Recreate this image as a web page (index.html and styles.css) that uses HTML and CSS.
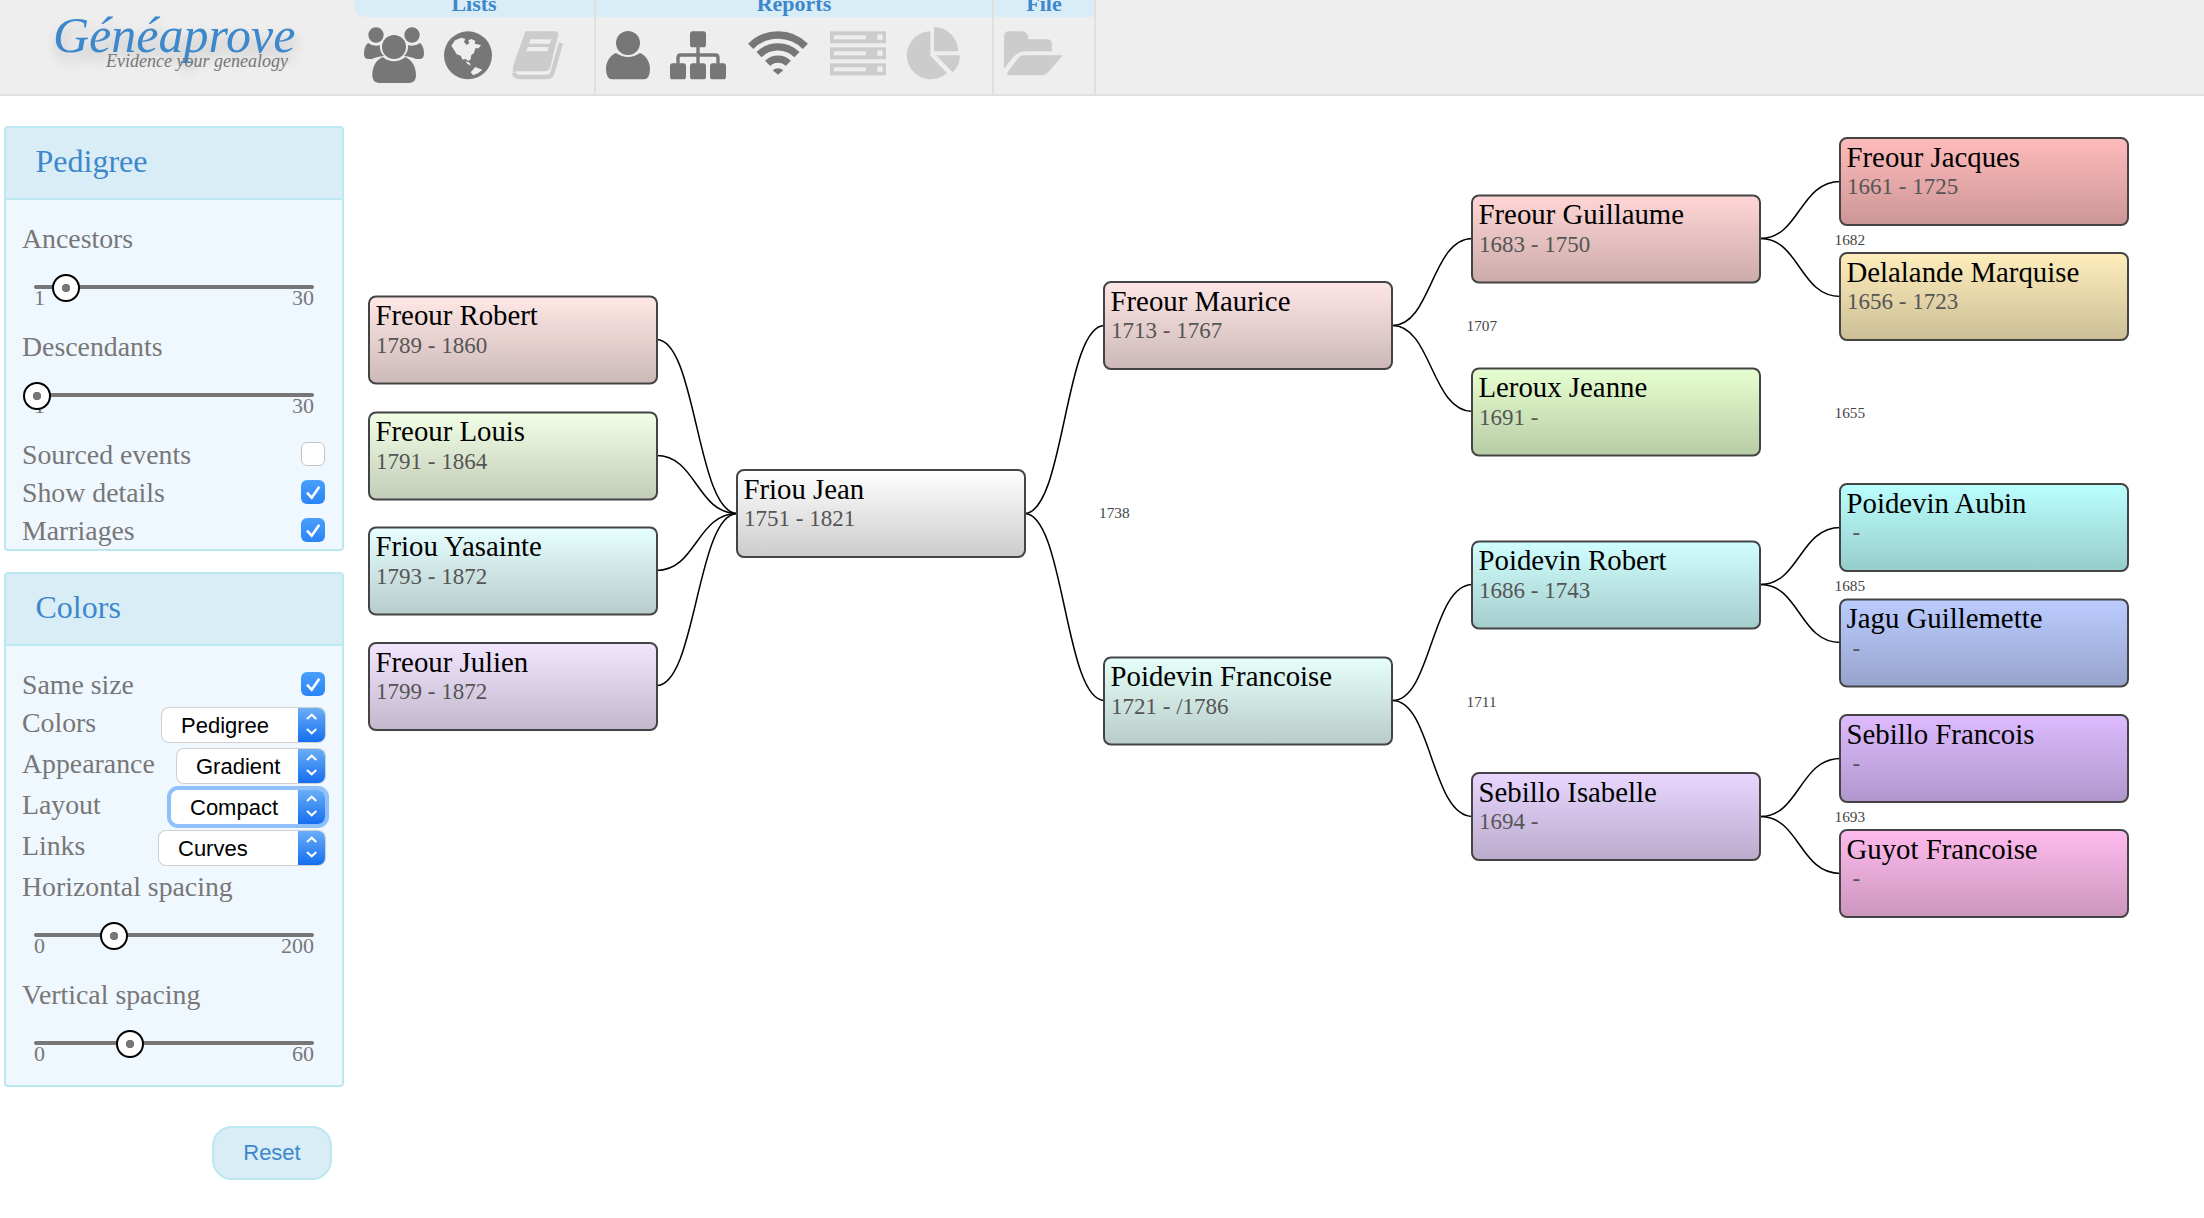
FILE: index.html
```html
<!DOCTYPE html>
<html lang="en">
<head>
  <meta charset="UTF-8">
  <title>Généaprove - Pedigree</title>
  <link rel="stylesheet" href="styles.css">
</head>
<body>

  <header class="topbar">
    <div class="logo">
      <div class="logo-name">Généaprove</div>
      <div class="logo-tag">Evidence your genealogy</div>
    </div>

    <nav class="menu menu-lists">
      <div class="menu-title">Lists</div>
      <div class="menu-icons">
        <svg class="icon" width="60" height="56.7" viewBox="30 20 180 170">
          <circle cx="66" cy="44" r="23"/><circle cx="174" cy="44" r="23"/><circle cx="120" cy="80" r="36"/>
          <path d="M55 165C55 140 65 120 86 110Q120 136 154 110C175 120 186 140 186 165Q186 188 165 188H76Q55 188 55 165Z"/>
          <path d="M42 68Q58 80 78 75Q76 95 90 107Q66 110 54 116H44Q30 116 30 100C30 88 33 75 42 68Z"/>
          <path d="M198 68Q182 80 162 75Q164 95 150 107Q174 110 186 116H196Q210 116 210 100C210 88 207 75 198 68Z"/>
        </svg>
        <svg class="icon" width="48" height="56.7" viewBox="270 20 144 170">
          <circle cx="342" cy="105" r="72"/>
          <path class="cut" d="M292 76L303 60L322 52L334 56L330 64L338 74L346 68L343 60L352 56L364 62L362 70L381 74L374 84L364 84L360 98L352 104L350 116L344 122L334 116L326 118L320 106L308 102L300 88Z"/>
          <path class="cut" d="M334 122L348 128L350 136L340 130Z"/>
          <path class="cut" d="M350 156L364 140L385 148L373 158L358 165Z"/>
        </svg>
        <svg class="icon icon-off" width="52" height="56.7" viewBox="475 20 156 170">
          <path d="M515 33H603Q616 33 613 47L590 140Q586 153 573 153H492Q482 153 478 160Q476 145 480 132Z"/>
          <path class="band" d="M480 158Q484 170 500 170H580Q592 170 596 158L622 68"/>
          <path class="cut" d="M530 57H593L589 70H526Z"/>
          <path class="cut" d="M522 80H585L581 93H518Z"/>
        </svg>
      </div>
    </nav>

    <nav class="menu menu-reports">
      <div class="menu-title">Reports</div>
      <div class="menu-icons">
        <svg class="icon" width="44" height="56.7" viewBox="18 20 132 170">
          <circle cx="84" cy="68" r="36"/>
          <path d="M18 145C18 125 30 105 48 98Q84 122 120 98C138 105 150 125 150 145Q150 177 130 177H38Q18 177 18 145Z"/>
        </svg>
        <svg class="icon" width="56" height="56.7" viewBox="210 20 168 170">
          <rect x="270" y="33" width="48" height="48" rx="8"/>
          <rect x="210" y="129" width="48" height="48" rx="8"/>
          <rect x="270" y="129" width="48" height="48" rx="8"/>
          <rect x="330" y="129" width="48" height="48" rx="8"/>
          <path class="band" d="M234 130V112Q234 104 242 104H346Q354 104 354 112V130M294 80V130"/>
        </svg>
        <svg class="icon" width="64" height="56.7" viewBox="438 20 192 170">
          <path class="wave" d="M452 78A116 116 0 0 1 616 78"/>
          <path class="wave" d="M477 103A81 81 0 0 1 591 103"/>
          <path class="wave" d="M503 129A44 44 0 0 1 565 129"/>
          <path d="M518 150Q534 138 550 150L534 163Z"/>
        </svg>
        <svg class="icon icon-off" width="56" height="56.7" viewBox="15 20 168 170">
          <rect x="15" y="33" width="168" height="36"/>
          <rect x="15" y="81" width="168" height="36"/>
          <rect x="15" y="129" width="168" height="36"/>
          <rect class="cut" x="27" y="45" width="96" height="12"/>
          <rect class="cut" x="27" y="93" width="96" height="12"/>
          <rect class="cut" x="27" y="141" width="96" height="12"/>
          <circle class="cut" cx="165" cy="51" r="9"/>
          <circle class="cut" cx="165" cy="99" r="9"/>
          <circle class="cut" cx="165" cy="147" r="9"/>
        </svg>
        <svg class="icon icon-off" width="54" height="56.7" viewBox="243 20 162 170">
          <path d="M316 33A72 72 0 1 0 366 158L316 106Z"/>
          <path d="M327 20A72 72 0 0 1 399 93H327Z"/>
          <path d="M333 105H405A72 72 0 0 1 383 156Z"/>
        </svg>
      </div>
    </nav>

    <nav class="menu menu-file">
      <div class="menu-title">File</div>
      <div class="menu-icons">
        <svg class="icon icon-off" width="59" height="56.7" viewBox="537 20 177 170">
          <path d="M537 50Q537 33 553 33H590Q610 33 610 57H665Q681 57 681 73V93H600Q580 93 565 110L537 145Z"/>
          <path d="M590 105H714L670 155Q660 165 650 165H555Q542 165 548 155L578 115Q585 105 600 105Z"/>
        </svg>
      </div>
    </nav>
  </header>

  <div class="page">
    <aside class="sidebar">

      <section class="panel">
        <h2 class="panel-head">Pedigree</h2>
        <div class="panel-body">
          <div class="label">Ancestors</div>
          <div class="slider">
            <div class="slider-track"></div>
            <div class="slider-ticks"><span>1</span><span>30</span></div>
            <div class="slider-knob" style="left: 17.5px"></div>
          </div>
          <div class="label">Descendants</div>
          <div class="slider">
            <div class="slider-track"></div>
            <div class="slider-ticks"><span>1</span><span>30</span></div>
            <div class="slider-knob" style="left: -11.5px"></div>
          </div>
          <div class="row">
            <span class="label">Sourced events</span>
            <span class="check"></span>
          </div>
          <div class="row">
            <span class="label">Show details</span>
            <span class="check check-on"><svg width="24" height="24" viewBox="0 0 24 24"><path d="M6 12.7L10.7 17.7L18.3 6.7"/></svg></span>
          </div>
          <div class="row">
            <span class="label">Marriages</span>
            <span class="check check-on"><svg width="24" height="24" viewBox="0 0 24 24"><path d="M6 12.7L10.7 17.7L18.3 6.7"/></svg></span>
          </div>
        </div>
      </section>

      <section class="panel">
        <h2 class="panel-head">Colors</h2>
        <div class="panel-body panel-body-last">
          <div class="row">
            <span class="label">Same size</span>
            <span class="check check-on"><svg width="24" height="24" viewBox="0 0 24 24"><path d="M6 12.7L10.7 17.7L18.3 6.7"/></svg></span>
          </div>
          <div class="row row-select">
            <span class="label">Colors</span>
            <div class="select select-colors">
              <span>Pedigree</span>
              <div class="select-arrow"><svg width="27" height="33" viewBox="0 0 27 33"><path d="M9 11L13.7 6.7L18.3 11M9 21L13.7 25.3L18.3 21"/></svg></div>
            </div>
          </div>
          <div class="row row-select">
            <span class="label">Appearance</span>
            <div class="select select-appearance">
              <span>Gradient</span>
              <div class="select-arrow"><svg width="27" height="33" viewBox="0 0 27 33"><path d="M9 11L13.7 6.7L18.3 11M9 21L13.7 25.3L18.3 21"/></svg></div>
            </div>
          </div>
          <div class="row row-select">
            <span class="label">Layout</span>
            <div class="select select-layout">
              <span>Compact</span>
              <div class="select-arrow"><svg width="27" height="33" viewBox="0 0 27 33"><path d="M9 11L13.7 6.7L18.3 11M9 21L13.7 25.3L18.3 21"/></svg></div>
            </div>
          </div>
          <div class="row row-select">
            <span class="label">Links</span>
            <div class="select select-links">
              <span>Curves</span>
              <div class="select-arrow"><svg width="27" height="33" viewBox="0 0 27 33"><path d="M9 11L13.7 6.7L18.3 11M9 21L13.7 25.3L18.3 21"/></svg></div>
            </div>
          </div>
          <div class="label">Horizontal spacing</div>
          <div class="slider">
            <div class="slider-track"></div>
            <div class="slider-ticks"><span>0</span><span>200</span></div>
            <div class="slider-knob" style="left: 65.5px"></div>
          </div>
          <div class="label">Vertical spacing</div>
          <div class="slider">
            <div class="slider-track"></div>
            <div class="slider-ticks"><span>0</span><span>60</span></div>
            <div class="slider-knob" style="left: 81.5px"></div>
          </div>
        </div>
      </section>

      <button class="reset">Reset</button>
    </aside>

    <!-- viewBox starts at the canvas corner so coordinates stay page coordinates -->
    <svg class="tree" width="1856" height="1122" viewBox="348 96 1856 1122">
      <defs>
        <linearGradient id="g-jean" x1="0" y1="0" x2="0" y2="1"><stop offset="0" stop-color="#ffffff"/><stop offset="1" stop-color="#cccccc"/></linearGradient>
        <linearGradient id="g-robert" x1="0" y1="0" x2="0" y2="1"><stop offset="0" stop-color="#ffe8e6"/><stop offset="1" stop-color="#ccb9b8"/></linearGradient>
        <linearGradient id="g-louis" x1="0" y1="0" x2="0" y2="1"><stop offset="0" stop-color="#f2ffe6"/><stop offset="1" stop-color="#c2ccb8"/></linearGradient>
        <linearGradient id="g-yasainte" x1="0" y1="0" x2="0" y2="1"><stop offset="0" stop-color="#e6ffff"/><stop offset="1" stop-color="#b8cccc"/></linearGradient>
        <linearGradient id="g-julien" x1="0" y1="0" x2="0" y2="1"><stop offset="0" stop-color="#f2e6ff"/><stop offset="1" stop-color="#c2b8cc"/></linearGradient>
        <linearGradient id="g-maurice" x1="0" y1="0" x2="0" y2="1"><stop offset="0" stop-color="#ffe6e6"/><stop offset="1" stop-color="#ccb8b8"/></linearGradient>
        <linearGradient id="g-francoise" x1="0" y1="0" x2="0" y2="1"><stop offset="0" stop-color="#e6fffa"/><stop offset="1" stop-color="#b8ccc8"/></linearGradient>
        <linearGradient id="g-guillaume" x1="0" y1="0" x2="0" y2="1"><stop offset="0" stop-color="#ffd6d6"/><stop offset="1" stop-color="#ccabab"/></linearGradient>
        <linearGradient id="g-leroux" x1="0" y1="0" x2="0" y2="1"><stop offset="0" stop-color="#e6ffd0"/><stop offset="1" stop-color="#b8cca6"/></linearGradient>
        <linearGradient id="g-probert" x1="0" y1="0" x2="0" y2="1"><stop offset="0" stop-color="#d0ffff"/><stop offset="1" stop-color="#a6cccc"/></linearGradient>
        <linearGradient id="g-isabelle" x1="0" y1="0" x2="0" y2="1"><stop offset="0" stop-color="#e9d6ff"/><stop offset="1" stop-color="#baabcc"/></linearGradient>
        <linearGradient id="g-jacques" x1="0" y1="0" x2="0" y2="1"><stop offset="0" stop-color="#ffbbbb"/><stop offset="1" stop-color="#cc9696"/></linearGradient>
        <linearGradient id="g-delalande" x1="0" y1="0" x2="0" y2="1"><stop offset="0" stop-color="#ffeebb"/><stop offset="1" stop-color="#ccbe96"/></linearGradient>
        <linearGradient id="g-aubin" x1="0" y1="0" x2="0" y2="1"><stop offset="0" stop-color="#bbffff"/><stop offset="1" stop-color="#96cccc"/></linearGradient>
        <linearGradient id="g-jagu" x1="0" y1="0" x2="0" y2="1"><stop offset="0" stop-color="#bbccff"/><stop offset="1" stop-color="#96a3cc"/></linearGradient>
        <linearGradient id="g-sebillo" x1="0" y1="0" x2="0" y2="1"><stop offset="0" stop-color="#ddbbff"/><stop offset="1" stop-color="#b196cc"/></linearGradient>
        <linearGradient id="g-guyot" x1="0" y1="0" x2="0" y2="1"><stop offset="0" stop-color="#ffbbee"/><stop offset="1" stop-color="#cc96be"/></linearGradient>
      </defs>

      <!-- links -->
      <g class="links" transform="translate(0.5 0.5)">
        <path d="M656 339C696 339 696 513 737 513"/>
        <path d="M656 455C696 455 696 513 737 513"/>
        <path d="M656 570C696 570 696 513 737 513"/>
        <path d="M656 685C696 685 696 513 737 513"/>
        <path d="M1024 513C1064 513 1064 325 1104 325"/>
        <path d="M1024 513C1064 513 1064 700 1104 700"/>
        <path d="M1392 325C1431 325 1431 238 1472 238"/>
        <path d="M1392 325C1431 325 1431 411 1472 411"/>
        <path d="M1392 700C1431 700 1431 584 1472 584"/>
        <path d="M1392 700C1431 700 1431 816 1472 816"/>
        <path d="M1760 238C1799 238 1799 181 1840 181"/>
        <path d="M1760 238C1799 238 1799 296 1840 296"/>
        <path d="M1760 584C1799 584 1799 527 1840 527"/>
        <path d="M1760 584C1799 584 1799 642 1840 642"/>
        <path d="M1760 816C1799 816 1799 758 1840 758"/>
        <path d="M1760 816C1799 816 1799 873 1840 873"/>
      </g>

      <!-- marriage years -->
      <g class="years">
        <text x="1099" y="518">1738</text>
        <text x="1466.5" y="331">1707</text>
        <text x="1466.5" y="707">1711</text>
        <text x="1834.5" y="245">1682</text>
        <text x="1834.5" y="418">1655</text>
        <text x="1834.5" y="591">1685</text>
        <text x="1834.5" y="822">1693</text>
      </g>

      <!-- children -->
      <g class="node" transform="translate(369 296.5)"><rect fill="url(#g-robert)"/><text class="name" x="6.5" y="28.5">Freour Robert</text><text class="dates" x="7" y="56.3">1789 - 1860</text></g>
      <g class="node" transform="translate(369 412.5)"><rect fill="url(#g-louis)"/><text class="name" x="6.5" y="28.5">Freour Louis</text><text class="dates" x="7" y="56.3">1791 - 1864</text></g>
      <g class="node" transform="translate(369 527.5)"><rect fill="url(#g-yasainte)"/><text class="name" x="6.5" y="28.5">Friou Yasainte</text><text class="dates" x="7" y="56.3">1793 - 1872</text></g>
      <g class="node" transform="translate(369 643)"><rect fill="url(#g-julien)"/><text class="name" x="6.5" y="28.5">Freour Julien</text><text class="dates" x="7" y="56.3">1799 - 1872</text></g>

      <!-- root -->
      <g class="node" transform="translate(737 470)"><rect fill="url(#g-jean)"/><text class="name" x="6.5" y="28.5">Friou Jean</text><text class="dates" x="7" y="56.3">1751 - 1821</text></g>

      <!-- parents -->
      <g class="node" transform="translate(1104 282)"><rect fill="url(#g-maurice)"/><text class="name" x="6.5" y="28.5">Freour Maurice</text><text class="dates" x="7" y="56.3">1713 - 1767</text></g>
      <g class="node" transform="translate(1104 657.5)"><rect fill="url(#g-francoise)"/><text class="name" x="6.5" y="28.5">Poidevin Francoise</text><text class="dates" x="7" y="56.3">1721 - /1786</text></g>

      <!-- grandparents -->
      <g class="node" transform="translate(1472 195.5)"><rect fill="url(#g-guillaume)"/><text class="name" x="6.5" y="28.5">Freour Guillaume</text><text class="dates" x="7" y="56.3">1683 - 1750</text></g>
      <g class="node" transform="translate(1472 368.5)"><rect fill="url(#g-leroux)"/><text class="name" x="6.5" y="28.5">Leroux Jeanne</text><text class="dates" x="7" y="56.3">1691 -</text></g>
      <g class="node" transform="translate(1472 541.5)"><rect fill="url(#g-probert)"/><text class="name" x="6.5" y="28.5">Poidevin Robert</text><text class="dates" x="7" y="56.3">1686 - 1743</text></g>
      <g class="node" transform="translate(1472 773)"><rect fill="url(#g-isabelle)"/><text class="name" x="6.5" y="28.5">Sebillo Isabelle</text><text class="dates" x="7" y="56.3">1694 -</text></g>

      <!-- great grandparents -->
      <g class="node" transform="translate(1840 138)"><rect fill="url(#g-jacques)"/><text class="name" x="6.5" y="28.5">Freour Jacques</text><text class="dates" x="7" y="56.3">1661 - 1725</text></g>
      <g class="node" transform="translate(1840 253)"><rect fill="url(#g-delalande)"/><text class="name" x="6.5" y="28.5">Delalande Marquise</text><text class="dates" x="7" y="56.3">1656 - 1723</text></g>
      <g class="node" transform="translate(1840 484)"><rect fill="url(#g-aubin)"/><text class="name" x="6.5" y="28.5">Poidevin Aubin</text><text class="dates" x="12.5" y="56.3">-</text></g>
      <g class="node" transform="translate(1840 599.5)"><rect fill="url(#g-jagu)"/><text class="name" x="6.5" y="28.5">Jagu Guillemette</text><text class="dates" x="12.5" y="56.3">-</text></g>
      <g class="node" transform="translate(1840 715)"><rect fill="url(#g-sebillo)"/><text class="name" x="6.5" y="28.5">Sebillo Francois</text><text class="dates" x="12.5" y="56.3">-</text></g>
      <g class="node" transform="translate(1840 830)"><rect fill="url(#g-guyot)"/><text class="name" x="6.5" y="28.5">Guyot Francoise</text><text class="dates" x="12.5" y="56.3">-</text></g>
    </svg>
  </div>

</body>
</html>
```

FILE: styles.css
```css
:root {
  --blue: #3d87cb;
  --grey: #777;
  --icon-off: #ccc;
  --bar-bg: #eee;
  --bar-line: #e0e0e0;
  --info-bg: #d9edf7;
  --info-line: #bce8f1;
}

html, body {
  height: 100%;
}

body {
  margin: 0;
  overflow: hidden;
  background: #fff;
  font-family: "Liberation Serif", serif;
  color: var(--grey);
}

/* Top bar */
.topbar {
  display: flex;
  height: 94px;
  background: var(--bar-bg);
  border-bottom: 2px solid var(--bar-line);
}

.logo {
  width: 354px;
  padding: 11px 0 0 53px;
  box-sizing: border-box;
}

.logo-name {
  font-size: 50px;
  font-style: italic;
  line-height: 49px;
  color: var(--blue);
  text-shadow: 2px 8px 14px rgba(0, 0, 0, 0.22);
}

.logo-tag {
  margin: -8px 0 0 53px;
  font-size: 18px;
  font-style: italic;
  line-height: 18px;
  color: var(--grey);
}

.menu {
  box-sizing: border-box;
  border-right: 2px solid var(--bar-line);
}

.menu-lists { width: 242px; }
.menu-reports { width: 398px; }
.menu-file { width: 102px; }

.menu-lists .menu-title {
  border-bottom-left-radius: 10px;
}

.menu-title {
  height: 17px;
  overflow: hidden;
  background: var(--info-bg);
  color: var(--blue);
  font-size: 22px;
  font-weight: bold;
  line-height: 7px;
  text-align: center;
}

.menu-icons {
  display: flex;
  gap: 20px;
  padding: 9.7px 0 0 10px;
}

.icon {
  flex: none;
  fill: var(--grey);
}

.icon .cut { fill: var(--bar-bg); }
.icon .band { fill: none; stroke: var(--grey); stroke-width: 10; }
.icon .wave { fill: none; stroke: var(--grey); stroke-width: 22; }

.icon-off { fill: var(--icon-off); }
.icon-off .band { stroke: var(--icon-off); stroke-width: 13; }

/* Sidebar */
.page {
  display: flex;
}

.sidebar {
  display: flex;
  flex-direction: column;
  flex: none;
  width: 340px;
  padding: 30px 4px 0;
}

.panel {
  margin-bottom: 21px;
  background: #f0f8ff;
  border: 2px solid var(--info-line);
  border-radius: 4px;
}

.panel-head {
  height: 70px;
  margin: 0;
  padding-left: 29.5px;
  background: var(--info-bg);
  border-bottom: 2px solid var(--info-line);
  color: var(--blue);
  font-size: 32px;
  font-weight: normal;
  line-height: 66px;
}

.panel-body {
  padding: 20px 17px 0 16px;
}

.panel-body-last {
  padding-bottom: 1px;
}

.label {
  font-size: 27.8px;
  line-height: 38px;
  color: var(--grey);
}

.row {
  display: flex;
  align-items: center;
  justify-content: space-between;
  height: 38px;
}

.row:last-child {
  height: 37px;
}

.row-select {
  height: 41px;
}

.row-select .label {
  align-self: flex-start;
}

/* Sliders */
.slider {
  position: relative;
  height: 43px;
  margin: 0 11px 0 12px;
  padding-top: 27px;
}

.slider-track {
  height: 4px;
  background: var(--grey);
  border-radius: 2px;
}

.slider-ticks {
  display: flex;
  justify-content: space-between;
  margin-top: -2px;
  font-size: 22px;
  line-height: 22px;
}

.slider-knob {
  position: absolute;
  top: 16px;
  box-sizing: border-box;
  width: 28px;
  height: 28px;
  background: #fff radial-gradient(circle, var(--grey) 4px, transparent 4.5px);
  border: 2px solid #000;
  border-radius: 50%;
}

/* Checkboxes */
.check {
  flex: none;
  box-sizing: border-box;
  width: 24px;
  height: 24px;
  margin-top: -2px;
  background: #fff;
  border: 1px solid #c4c4c4;
  border-radius: 6px;
}

.check-on {
  display: block;
  background: linear-gradient(#4a9ffb, #2a84f5);
  border: 0;
}

.check svg {
  display: block;
  fill: none;
  stroke: #fff;
  stroke-width: 2.6;
}

/* Selects */
.select {
  display: flex;
  flex: none;
  justify-content: space-between;
  box-sizing: border-box;
  height: 34px;
  padding-left: 19px;
  overflow: hidden;
  background: #fff;
  border-radius: 7px;
  box-shadow: 0 0 0 1px #d0d0d0;
  color: #000;
  font-family: "Liberation Sans", sans-serif;
  font-size: 22px;
  line-height: 35px;
}

.select-colors { width: 163px; }
.select-appearance { width: 148px; }
.select-layout { width: 154px; box-shadow: 0 0 0 4px #8fc0fa; }
.select-links { width: 166px; }

.select-arrow {
  width: 27px;
  height: 34px;
  background: linear-gradient(#6aaef8, #146ef0);
}

.select-arrow svg {
  display: block;
  fill: none;
  stroke: #fff;
  stroke-width: 2;
}

.reset {
  align-self: flex-end;
  width: 120px;
  height: 54px;
  margin: 18px 12px 0 0;
  background: var(--info-bg);
  border: 2px solid var(--info-line);
  border-radius: 20px;
  color: var(--blue);
  font-family: "Liberation Sans", sans-serif;
  font-size: 22px;
}

/* Tree */
.tree {
  display: block;
  flex: none;
}

.links path {
  fill: none;
  stroke: #000;
  stroke-width: 1.5;
}

.years text {
  font-size: 15.3px;
  fill: #444;
}

.node rect {
  width: 288px;
  height: 87px;
  rx: 7px;
  stroke: #444;
  stroke-width: 2;
}

.name {
  font-size: 28.8px;
  fill: #000;
}

.dates {
  font-size: 23px;
  fill: #555;
}
```
